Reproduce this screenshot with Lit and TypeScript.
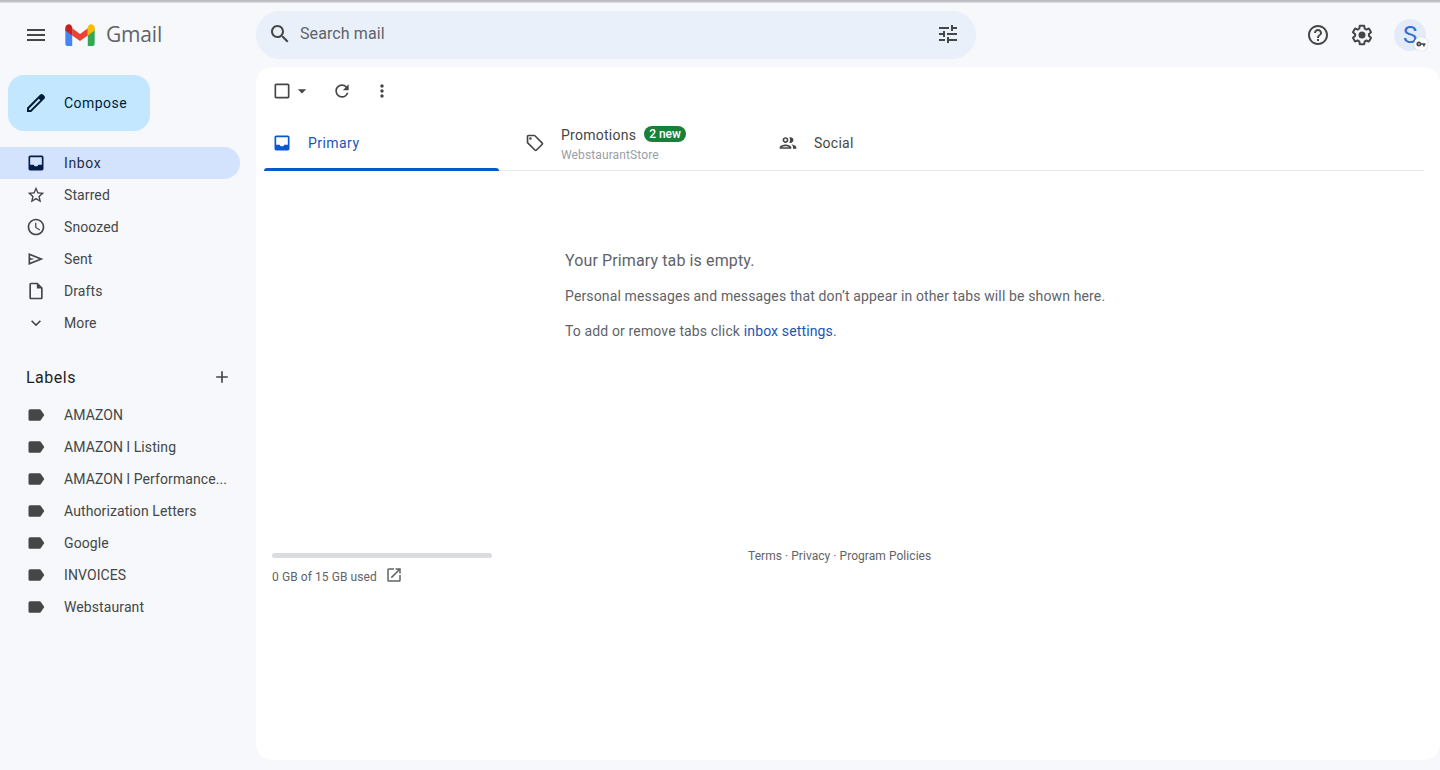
import { LitElement, html, css, svg } from "lit";
import { customElement } from "lit/decorators.js";

const i = (d: unknown, size = 20, vb = 24) =>
  html`<svg class="ic" width=${size} height=${size} viewBox="0 0 ${vb} ${vb}" fill="currentColor">${d}</svg>`;

const P = {
  menu: svg`<path d="M3 18h18v-2H3v2zm0-5h18v-2H3v2zm0-7v2h18V6H3z"/>`,
  pencil: svg`<path d="M20.41 4.94l-1.35-1.35c-.78-.78-2.05-.78-2.83 0L3 16.82V21h4.18L20.41 7.77c.79-.78.79-2.05 0-2.83zm-14 14.12L5 19v-1.36l9.82-9.82 1.41 1.41-9.82 9.83z"/>`,
  inbox: svg`<path d="M19 3H5c-1.1 0-2 .9-2 2v14c0 1.1.9 2 2 2h14c1.1 0 2-.9 2-2V5c0-1.1-.9-2-2-2zm0 2v9h-4.2c-.4 1.2-1.5 2-2.8 2s-2.4-.8-2.8-2H5V5h14z"/>`,
  star: svg`<path d="M22 9.24l-7.19-.62L12 2 9.19 8.63 2 9.24l5.46 4.73L5.82 21 12 17.27 18.18 21l-1.63-7.03L22 9.24zM12 15.4l-3.76 2.27 1-4.28-3.32-2.88 4.38-.38L12 6.1l1.71 4.04 4.38.38-3.32 2.88 1 4.28L12 15.4z"/>`,
  clock: svg`<path d="M11.99 2C6.47 2 2 6.48 2 12s4.47 10 9.99 10C17.52 22 22 17.52 22 12S17.52 2 11.99 2zM12 20c-4.42 0-8-3.58-8-8s3.58-8 8-8 8 3.58 8 8-3.58 8-8 8zm.5-13H11v6l5.25 3.15.75-1.23-4.5-2.67V7z"/>`,
  sent: svg`<path d="M3 4.800v14.400L21 12 3 4.800zm2 3L15.600 12 5 16.200v-2.900l5.500-1.300L5 10.700V7.800z"/>`,
  draft: svg`<path d="M14 2H6c-1.1 0-2 .9-2 2v16c0 1.1.9 2 2 2h12c1.1 0 2-.9 2-2V8l-6-6zm4 18H6V4h7v5h5v11z"/>`,
  chev: svg`<path d="M16.59 8.59L12 13.17 7.41 8.59 6 10l6 6 6-6z"/>`,
  plus: svg`<path d="M19 13h-6v6h-2v-6H5v-2h6V5h2v6h6v2z"/>`,
  label: svg`<path d="M17.6 5.8c-.4-.5-1-.8-1.6-.8L5 5c-1.1 0-2 .9-2 2v10c0 1.1.9 2 2 2l11 0c.6 0 1.2-.3 1.6-.8L22 12l-4.400-6.200z"/>`,
  search: svg`<path d="M15.500 14h-.79l-.28-.27C15.410 12.590 16 11.110 16 9.500 16 5.910 13.090 3 9.500 3S3 5.910 3 9.500 5.910 16 9.500 16c1.610 0 3.090-.59 4.230-1.570l.27.28v.79l5 4.990L20.490 19l-4.990-5zm-6 0C7.010 14 5 11.990 5 9.500S7.010 5 9.500 5 14 7.010 14 9.500 11.990 14 9.500 14z"/>`,
  tune: svg`<path d="M3 17v2h6v-2H3zM3 5v2h10V5H3zm10 16v-2h8v-2h-8v-2h-2v6h2zM7 9v2H3v2h4v2h2V9H7zm14 4v-2H11v2h10zm-6-4h2V7h4V5h-4V3h-2v6z"/>`,
  help: svg`<path d="M11 18h2v-2h-2v2zm1-16C6.480 2 2 6.480 2 12s4.480 10 10 10 10-4.480 10-10S17.520 2 12 2zm0 18c-4.410 0-8-3.590-8-8s3.590-8 8-8 8 3.590 8 8-3.590 8-8 8zm0-14c-2.210 0-4 1.790-4 4h2c0-1.100.9-2 2-2s2 .9 2 2c0 2-3 1.750-3 5h2c0-2.250 3-2.500 3-5 0-2.210-1.790-4-4-4z"/>`,
  gear: svg`<path d="M13.850 22.250h-3.700c-.74 0-1.360-.54-1.450-1.270l-.27-1.890c-.27-.14-.53-.29-.79-.46l-1.800.72c-.7.26-1.470-.03-1.810-.65L2.200 15.530c-.35-.66-.2-1.440.36-1.880l1.530-1.190c-.01-.15-.02-.3-.02-.46 0-.15.01-.31.02-.46l-1.520-1.190c-.59-.45-.74-1.260-.37-1.880l1.850-3.190c.34-.62 1.110-.9 1.790-.63l1.810.73c.26-.17.520-.32.780-.46l.27-1.910c.09-.7.71-1.250 1.440-1.250h3.700c.74 0 1.360.54 1.450 1.270l.27 1.890c.27.14.53.29.79.46l1.800-.72c.71-.26 1.480.03 1.820.65l1.840 3.180c.36.66.2 1.440-.36 1.880l-1.520 1.190c.01.15.02.3.02.46s-.01.31-.02.46l1.520 1.190c.56.45.72 1.230.37 1.860l-1.860 3.220c-.34.62-1.110.9-1.800.63l-1.800-.72c-.26.17-.52.32-.78.46l-.27 1.910c-.1.680-.72 1.220-1.460 1.220zm-3.230-2h2.760l.37-2.550.53-.22c.44-.18.88-.44 1.340-.78l.45-.34 2.380.96 1.380-2.400-2.030-1.580.07-.56c.03-.26.060-.51.060-.78s-.03-.53-.060-.78l-.07-.56 2.030-1.580-1.390-2.400-2.390.96-.45-.35c-.42-.32-.87-.58-1.330-.77l-.52-.22-.37-2.550h-2.760l-.37 2.550-.53.21c-.44.19-.88.44-1.340.79l-.45.33-2.380-.95-1.390 2.390 2.030 1.580-.07.56a7 7 0 0 0-.060.79c0 .26.020.53.060.78l.07.56-2.030 1.580 1.380 2.400 2.390-.96.45.35c.43.33.86.58 1.330.77l.53.22.38 2.550z"/><circle cx="12" cy="12" r="3.500"/>`,
  more: svg`<path d="M12 8c1.100 0 2-.9 2-2s-.9-2-2-2-2 .9-2 2 .9 2 2 2zm0 2c-1.100 0-2 .9-2 2s.9 2 2 2 2-.9 2-2-.9-2-2-2zm0 6c-1.100 0-2 .9-2 2s.9 2 2 2 2-.9 2-2-.9-2-2-2z"/>`,
  refresh: svg`<path d="M17.650 6.350A7.958 7.958 0 0 0 12 4c-4.420 0-7.990 3.580-7.990 8s3.570 8 7.990 8c3.730 0 6.840-2.550 7.730-6h-2.080A5.990 5.990 0 0 1 12 18c-3.310 0-6-2.690-6-6s2.690-6 6-6c1.660 0 3.140.69 4.220 1.780L13 11h7V4l-2.350 2.350z"/>`,
  checkbox: svg`<path d="M19 5v14H5V5h14m0-2H5c-1.100 0-2 .9-2 2v14c0 1.100.9 2 2 2h14c1.100 0 2-.9 2-2V5c0-1.100-.9-2-2-2z"/>`,
  drop: svg`<path d="M7 10l5 5 5-5z"/>`,
  tag: svg`<path d="M21.410 11.410l-8.830-8.830C12.210 2.210 11.700 2 11.170 2H4c-1.100 0-2 .9-2 2v7.170c0 .53.21 1.040.59 1.410l8.830 8.830c.78.78 2.050.78 2.830 0l7.170-7.170c.78-.78.78-2.050 0-2.830zM12.830 20L4 11.170V4h7.170L20 12.830 12.830 20z"/><circle cx="6.500" cy="6.500" r="1.500"/>`,
  people: svg`<path d="M9 12c1.930 0 3.500-1.570 3.500-3.500S10.930 5 9 5 5.500 6.570 5.500 8.500 7.070 12 9 12zm0-5c.83 0 1.500.67 1.500 1.500S9.830 10 9 10s-1.500-.67-1.500-1.500S8.170 7 9 7zm0 6.750c-2.340 0-7 1.170-7 3.500V19h14v-1.750c0-2.330-4.660-3.500-7-3.500zM4.340 17c.84-.58 2.870-1.250 4.660-1.250s3.820.67 4.660 1.250H4.340zM16.040 13.810c1.160.84 1.960 1.960 1.960 3.440V19h4v-1.750c0-2.020-3.500-3.170-5.960-3.440zM15 12c1.930 0 3.500-1.570 3.500-3.500S16.930 5 15 5c-.54 0-1.040.13-1.500.35.63.89 1 1.980 1 3.150s-.37 2.260-1 3.150c.46.22.96.35 1.500.35z"/>`,
  open: svg`<path d="M19 19H5V5h7V3H5a2 2 0 0 0-2 2v14a2 2 0 0 0 2 2h14c1.100 0 2-.9 2-2v-7h-2v7zM14 3v2h3.590l-9.830 9.830 1.410 1.410L19 6.410V10h2V3h-7z"/>`,
  key: svg`<path d="M12.650 10A6 6 0 0 0 7 6a6 6 0 0 0 0 12 6 6 0 0 0 5.650-4H17v4h4v-4h2v-4H12.650zM7 14a2 2 0 1 1 0-4 2 2 0 0 1 0 4z"/>`,
};

const nav: [string, unknown][] = [
  ["Starred", P.star],
  ["Snoozed", P.clock],
  ["Sent", P.sent],
  ["Drafts", P.draft],
  ["More", P.chev],
];
const labels = [
  "AMAZON",
  "AMAZON l Listing",
  "AMAZON l Performance...",
  "Authorization Letters",
  "Google",
  "INVOICES",
  "Webstaurant",
];

@customElement("app-root")
export class AppRoot extends LitElement {
  static styles = css`
    :host {
      display: block;
      width: 1440px;
      height: 770px;
      overflow: hidden;
      background: #f6f8fc;
      font-family: Roboto, "Liberation Sans", sans-serif;
      color: #444746;
      font-size: 14px;
    }
    .ic { display: block; flex: none; }
    .chrome { background: #c4c6cb; border-bottom: 1px solid #dadce0; height: 1px; }
    .chrome-top { height: 1px; background: #b9bbc0; }
    .header {
      height: 64px;
      display: grid;
      grid-template-columns: 256px 720px 1fr;
      align-items: center;
    }
    .brand { display: flex; align-items: center; padding-left: 24px; }
    .menu { color: #444746; margin-right: 17px; }
    .gmail {
      font-size: 21px;
      line-height: 24px;
      color: #5f6368;
      margin-left: 11px;
      margin-top: -3px;
      letter-spacing: -0.2px;
      font-family: "Open Sans", Roboto, sans-serif;
    }
    .search {
      height: 48px;
      background: #e9f0fa;
      border-radius: 24px;
      display: flex;
      align-items: center;
      box-sizing: border-box;
      padding: 0 16px 2px 12px;
      color: #444746;
    }
    .search .txt { flex: 1; font-size: 16px; margin: 0 0 1px 8px; color: #5f6368; letter-spacing: 0.1px; }
    .actions {
      display: flex;
      align-items: center;
      justify-content: flex-end;
      color: #444746;
      padding-right: 14px;
      gap: 20px;
    }
    .avatar {
      width: 32px;
      height: 32px;
      border-radius: 50%;
      background: #e3ebf8;
      color: #2f6fd0;
      font-size: 24px;
      display: flex;
      align-items: center;
      justify-content: center;
      position: relative;
    }
    .badge {
      position: absolute;
      right: -2px;
      bottom: 0;
      width: 14px;
      height: 14px;
      border-radius: 50%;
      background: #fff;
      box-shadow: 0 0 1px rgba(60, 64, 67, 0.35);
      color: #444746;
      display: flex;
      align-items: center;
      justify-content: center;
    }
    .body { display: grid; grid-template-columns: 256px 1fr; height: 693px; }
    .side { display: flex; flex-direction: column; padding-top: 8px; letter-spacing: 0.1px; }
    .compose {
      margin-left: 8px;
      width: 142px;
      height: 56px;
      border-radius: 16px;
      background: #c2e7ff;
      color: #001d35;
      display: flex;
      align-items: center;
      box-sizing: border-box;
      padding-left: 16px;
      gap: 16px;
      font-weight: 450;
      letter-spacing: 0.45px;
      margin-bottom: 16px;
    }
    .row {
      height: 32px;
      display: flex;
      align-items: center;
      padding-left: 26px;
      gap: 18px;
      width: 240px;
      box-sizing: border-box;
      border-radius: 0 16px 16px 0;
      color: #444746;
    }
    .row.active { background: #d3e3fd; color: #1f2f4a; font-weight: 450; letter-spacing: 0.6px; }
    .row.active .ic { color: #041e49; }
    .lab-head {
      height: 32px;
      margin-top: 22px;
      margin-bottom: 6px;
      width: 240px;
      box-sizing: border-box;
      padding: 0 8px 0 26px;
      display: flex;
      align-items: center;
      justify-content: space-between;
      font-size: 16px;
      letter-spacing: 0.5px;
      color: #1f1f1f;
    }
    .lab-head .ic { color: #444746; }
    .panel {
      height: 693px;
      background: #fff;
      border-radius: 16px;
      display: flex;
      flex-direction: column;
      padding: 0 16px 0 8px;
      box-sizing: border-box;
    }
    .toolbar {
      height: 48px;
      display: flex;
      align-items: center;
      color: #444746;
      padding-left: 8px;
    }
    .toolbar .drop { margin-right: 20px; }
    .toolbar .refresh { margin-right: 20px; }
    .tabs { display: flex; height: 56px; border-bottom: 1px solid #e8eaed; box-sizing: border-box; }
    .tab {
      width: 253px;
      display: flex;
      align-items: center;
      padding-left: 8px;
      gap: 16px;
      box-sizing: border-box;
      color: #444746;
      position: relative;
    }
    .tab.on { color: #0b57d0; }
    .tab.on::after {
      content: "";
      position: absolute;
      left: 0;
      bottom: -1px;
      width: 235px;
      height: 3px;
      background: #0b57d0;
      border-radius: 3px 3px 0 0;
    }
    .tab.on .name { color: #1a56b8; font-weight: 450; letter-spacing: 0.45px; }
    .tab .name { font-size: 14px; letter-spacing: 0.25px; }
    .promo { padding-top: 2px; }
    .promo-top { display: flex; align-items: center; gap: 8px; height: 18px; }
    .pill {
      background: #188038;
      color: #fff;
      font-size: 12px;
      font-weight: 500;
      border-radius: 8px;
      height: 16px;
      line-height: 16px;
      padding: 0 5px;
      margin-top: -1px;
    }
    .sub { font-size: 12px; color: #9aa0a6; margin-top: 4px; line-height: 14px; letter-spacing: 0.12px; }
    .empty {
      height: 376px;
      padding: 79px 0 0 301px;
      box-sizing: border-box;
      color: #5f6368;
      letter-spacing: 0.14px;
    }
    .empty h2 { font-size: 16px; font-weight: 400; margin: 0; line-height: 22px; letter-spacing: 0.12px; }
    .empty p { margin: 14px 0 0; line-height: 21px; }
    .empty a { color: #1a56b8; text-decoration: none; }
    .foot { display: grid; grid-template-columns: 476px auto; padding-left: 8px; font-size: 12px; color: #5f6368; letter-spacing: 0.05px; }
    .bar { width: 220px; height: 5px; background: #dadce0; border-radius: 3px; margin-top: 6px; }
    .used { display: flex; align-items: center; gap: 8px; margin-top: 10px; height: 18px; color: #5f6368; letter-spacing: 0.08px; }
    .used .ic { margin-bottom: 4px; }
    .terms { line-height: 16px; margin-top: 1px; }
  `;

  render() {
    return html`
      <div class="chrome-top"></div>
      <div class="chrome"></div>
      <div class="header">
        <div class="brand">
          <span class="menu">${i(P.menu, 24)}</span>
          <svg width="30" height="22" viewBox="0 0 32 24">
            <path fill="#4285f4" d="M0 5v16.500C0 22.900 1.100 24 2.500 24H7.500V11.500L0 5z" />
            <path fill="#34a853" d="M24.500 11.500V24H29.500C30.900 24 32 22.900 32 21.500V5l-7.500 6.500z" />
            <path fill="#ea4335" d="M7.500 4.500V12.500L16 18.500l8.500-6V4.500L16 10.800 7.500 4.500z" />
            <path fill="#fbbc04" d="M24.500 3.500v9L32 7V4.200C32 1 28.300-.9 25.800 1l-1.300 2.500z" />
            <path fill="#c5221f" d="M0 7l7.500 5.500V3.500L6.200 1C3.700-.9 0 1 0 4.200V7z" />
          </svg>
          <span class="gmail">Gmail</span>
        </div>
        <div class="search">
          ${i(P.search, 24)}
          <span class="txt">Search mail</span>
          ${i(P.tune, 24)}
        </div>
        <div class="actions">
          ${i(P.help, 24)} ${i(P.gear, 24)}
          <div class="avatar">S<span class="badge">${i(P.key, 10)}</span></div>
        </div>
      </div>
      <div class="body">
        <div class="side">
          <div class="compose">${i(P.pencil, 24)}<span>Compose</span></div>
          <div class="row active">${i(P.inbox, 20)}<span>Inbox</span></div>
          ${nav.map(([t, p]) => html`<div class="row">${i(p, 20)}<span>${t}</span></div>`)}
          <div class="lab-head"><span>Labels</span>${i(P.plus, 20)}</div>
          ${labels.map((t) => html`<div class="row">${i(P.label, 20)}<span>${t}</span></div>`)}
        </div>
        <div class="panel">
          <div class="toolbar">
            ${i(P.checkbox, 20)}
            <span class="drop">${i(P.drop, 20)}</span>
            <span class="refresh">${i(P.refresh, 20)}</span>
            ${i(P.more, 20)}
          </div>
          <div class="tabs">
            <div class="tab on">${i(P.inbox, 20)}<span class="name">Primary</span></div>
            <div class="tab">
              ${i(P.tag, 20)}
              <div class="promo">
                <div class="promo-top"><span class="name">Promotions</span><span class="pill">2 new</span></div>
                <div class="sub">WebstaurantStore</div>
              </div>
            </div>
            <div class="tab">${i(P.people, 20)}<span class="name">Social</span></div>
          </div>
          <div class="empty">
            <h2>Your Primary tab is empty.</h2>
            <p>Personal messages and messages that don’t appear in other tabs will be shown here.</p>
            <p>To add or remove tabs click <a>inbox settings</a>.</p>
          </div>
          <div class="foot">
            <div>
              <div class="bar"></div>
              <div class="used"><span>0 GB of 15 GB used</span>${i(P.open, 18)}</div>
            </div>
            <div class="terms">Terms · Privacy · Program Policies</div>
          </div>
        </div>
      </div>
    `;
  }
}
